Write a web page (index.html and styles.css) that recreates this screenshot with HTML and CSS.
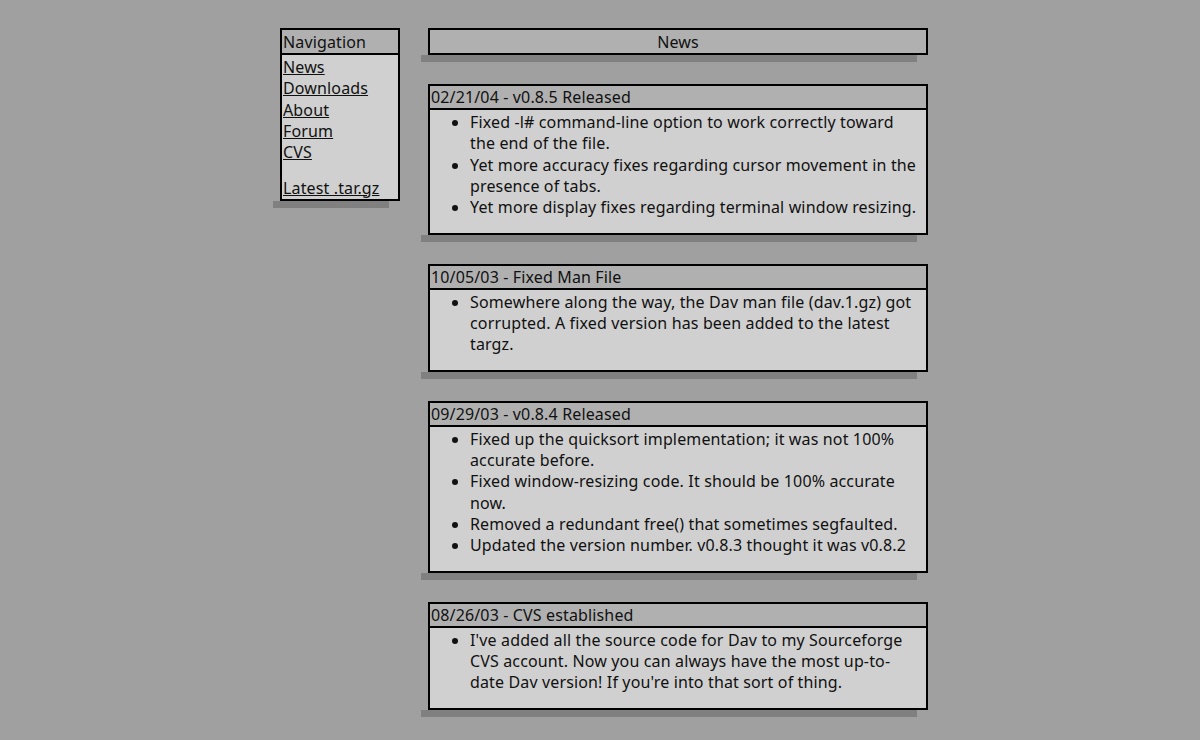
FILE: index.html
```html
<!DOCTYPE html>
<html>
<head>
<meta charset="utf-8">
<title>Dav</title>
<link rel="stylesheet" href="styles.css">
</head>
<body>
<div class="page">
  <div class="nav-col">
    <div class="box nav">
      <div class="nav-head">Navigation</div>
      <div class="nav-body">
        <a href="#">News</a><br>
        <a href="#">Downloads</a><br>
        <a href="#">About</a><br>
        <a href="#">Forum</a><br>
        <a href="#">CVS</a>
        <p class="nav-extra"><a href="#">Latest .tar.gz</a></p>
      </div>
    </div>
    <div class="shadow"></div>
  </div>
  <div class="news-col">
    <div class="block">
      <div class="box title">News</div>
      <div class="shadow"></div>
    </div>
    <div class="block">
      <div class="box">
        <div class="box-head">02/21/04 - v0.8.5 Released</div>
        <ul>
          <li>Fixed -l# command-line option to work correctly toward the end of the file.</li>
          <li>Yet more accuracy fixes regarding cursor movement in the presence of tabs.</li>
          <li>Yet more display fixes regarding terminal window resizing.</li>
        </ul>
      </div>
      <div class="shadow"></div>
    </div>
    <div class="block">
      <div class="box">
        <div class="box-head">10/05/03 - Fixed Man File</div>
        <ul>
          <li>Somewhere along the way, the Dav man file (dav.1.gz) got corrupted. A fixed version has been added to the latest targz.</li>
        </ul>
      </div>
      <div class="shadow"></div>
    </div>
    <div class="block">
      <div class="box">
        <div class="box-head">09/29/03 - v0.8.4 Released</div>
        <ul>
          <li>Fixed up the quicksort implementation; it was not 100% accurate before.</li>
          <li>Fixed window-resizing code. It should be 100% accurate now.</li>
          <li>Removed a redundant free() that sometimes segfaulted.</li>
          <li>Updated the version number. v0.8.3 thought it was v0.8.2</li>
        </ul>
      </div>
      <div class="shadow"></div>
    </div>
    <div class="block">
      <div class="box">
        <div class="box-head">08/26/03 - CVS established</div>
        <ul>
          <li>I've added all the source code for Dav to my Sourceforge CVS account. Now you can always have the most up-to-date Dav version! If you're into that sort of thing.</li>
        </ul>
      </div>
      <div class="shadow"></div>
    </div>
  </div>
</div>
</body>
</html>
```
FILE: styles.css
```css
html, body {
  margin: 0;
  padding: 0;
  background: #a0a0a0;
}
body {
  font-family: "Noto Sans", "Open Sans", sans-serif;
  font-size: 16px;
  letter-spacing: 0.14px;
  line-height: 21.33px;
  color: #111;
}
.page {
  display: flex;
  align-items: flex-start;
  gap: 28px;
  padding: 28px 0 0 280px;
}
.nav-col {
  width: 120px;
}
.news-col {
  width: 500px;
  display: flex;
  flex-direction: column;
  gap: 22px;
}
.box {
  border: 2px solid #000;
  background: #d0d0d0;
}
.nav-head {
  background: #b0b0b0;
  border-bottom: 2px solid #000;
  height: 23px;
  line-height: 24px;
  padding-left: 1px;
}
.box-head {
  background: #b0b0b0;
  border-bottom: 2px solid #000;
  height: 22px;
  line-height: 23px;
  padding-left: 1px;
}
.title {
  background: #b0b0b0;
  text-align: center;
  height: 23px;
  line-height: 25px;
}
.nav-body {
  padding: 2px 0 0 1px;
}
.nav-body a {
  color: #111;
  text-decoration: underline;
}
.nav-extra {
  margin: 14px 0 0 0;
}
ul {
  margin: 0 0 14px 0;
  padding: 2px 8px 0 40px;
}
.shadow {
  height: 7px;
  margin-left: -7px;
  width: calc(100% - 4px);
  background: #808080;
}
```
